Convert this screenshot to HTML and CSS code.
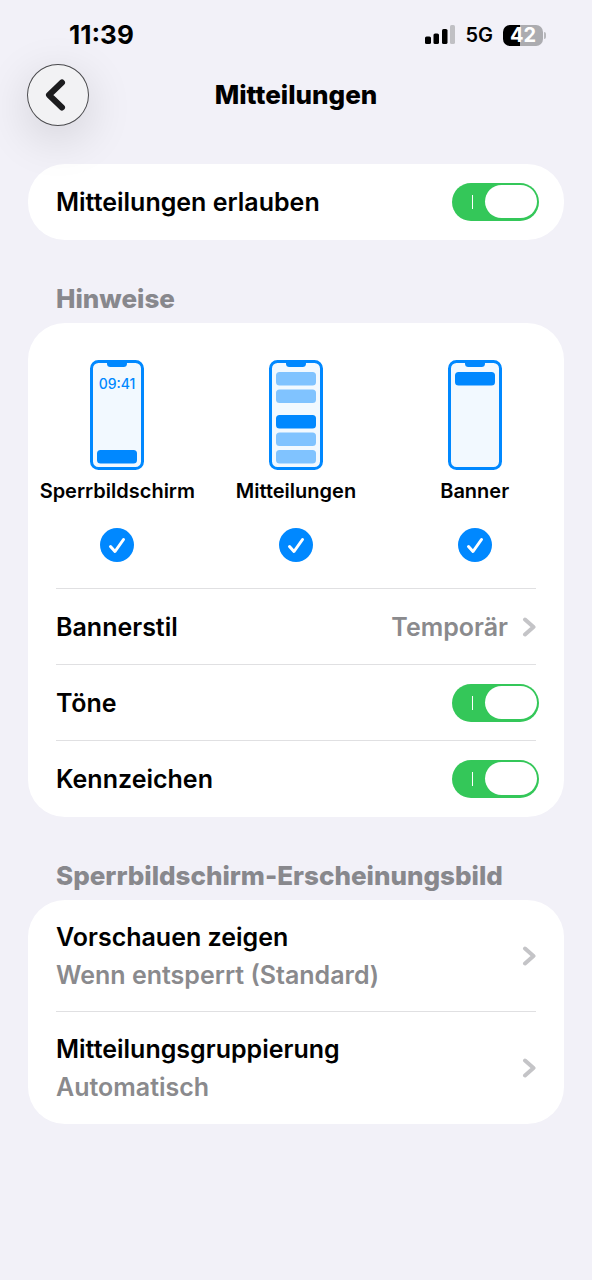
FILE: index.html
```html
<!DOCTYPE html>
<html lang="de">
<head>
<meta charset="utf-8">
<meta name="viewport" content="width=device-width, initial-scale=1">
<title>Mitteilungen</title>
<link rel="stylesheet" href="styles.css">
</head>
<body>
<div class="status">
  <span class="time">11:39</span>
  <div class="indicators">
    <svg class="signal" width="30" height="20" viewBox="0 0 30 20" aria-hidden="true">
      <rect x="0" y="11.500" width="6" height="7.500" rx="1.600"/>
      <rect x="8.500" y="8.500" width="5.500" height="10.500" rx="1.600"/>
      <rect x="17" y="4" width="5.500" height="15" rx="1.600"/>
      <rect x="25" y="0" width="5" height="19" rx="1.600" fill="#c0c0c4"/>
    </svg>
    <span class="network">5G</span>
    <div class="battery"><span class="level">42</span><span class="cap"></span></div>
  </div>
</div>
<header class="nav">
  <button class="back" type="button" aria-label="Zurück">
    <svg width="62" height="62" viewBox="0 0 62 62" aria-hidden="true"><path d="M35 18.500 22 31 35 43.500" fill="none" stroke="#1c1c1e" stroke-width="6" stroke-linecap="round" stroke-linejoin="round"/></svg>
  </button>
  <h1 class="title">Mitteilungen</h1>
</header>
<main class="content">
  <section class="card">
    <label class="row switch-row"><span>Mitteilungen erlauben</span><input class="switch" type="checkbox" role="switch" checked></label>
  </section>

  <h2 class="heading">Hinweise</h2>
  <section class="card">
    <div class="item options">
      <label class="option">
        <svg width="54" height="110" viewBox="0 0 54 110" aria-hidden="true">
          <rect class="phone" x="1.500" y="1.500" width="51" height="107" rx="7"/>
          <path class="solid" d="M16 1h22c-1 0-1 1-1 2 0 3-1 4-4 4H21c-3 0-4-1-4-4 0-1 0-2-1-2z"/>
          <text class="clock" x="27" y="29" text-anchor="middle">09:41</text>
          <rect class="solid" x="7" y="90" width="40" height="13.500" rx="3.500"/>
        </svg>
        <span>Sperrbildschirm</span>
        <span class="tick"><input type="checkbox" checked><svg width="34" height="34" viewBox="0 0 34 34" aria-hidden="true"><path d="M10.500 18.500 15 23.500 23.500 11.500"/></svg></span>
      </label>
      <label class="option">
        <svg width="54" height="110" viewBox="0 0 54 110" aria-hidden="true">
          <rect class="phone" x="1.500" y="1.500" width="51" height="107" rx="7"/>
          <path class="solid" d="M16 1h22c-1 0-1 1-1 2 0 3-1 4-4 4H21c-3 0-4-1-4-4 0-1 0-2-1-2z"/>
          <rect class="pale" x="7" y="12" width="40" height="13.500" rx="3.500"/>
          <rect class="pale" x="7" y="29.500" width="40" height="13.500" rx="3.500"/>
          <rect class="solid" x="7" y="55" width="40" height="13.500" rx="3.500"/>
          <rect class="pale" x="7" y="72.500" width="40" height="13.500" rx="3.500"/>
          <rect class="pale" x="7" y="90" width="40" height="13.500" rx="3.500"/>
        </svg>
        <span>Mitteilungen</span>
        <span class="tick"><input type="checkbox" checked><svg width="34" height="34" viewBox="0 0 34 34" aria-hidden="true"><path d="M10.500 18.500 15 23.500 23.500 11.500"/></svg></span>
      </label>
      <label class="option">
        <svg width="54" height="110" viewBox="0 0 54 110" aria-hidden="true">
          <rect class="phone" x="1.500" y="1.500" width="51" height="107" rx="7"/>
          <path class="solid" d="M16 1h22c-1 0-1 1-1 2 0 3-1 4-4 4H21c-3 0-4-1-4-4 0-1 0-2-1-2z"/>
          <rect class="solid" x="7" y="12" width="40" height="13.500" rx="3.500"/>
        </svg>
        <span>Banner</span>
        <span class="tick"><input type="checkbox" checked><svg width="34" height="34" viewBox="0 0 34 34" aria-hidden="true"><path d="M10.500 18.500 15 23.500 23.500 11.500"/></svg></span>
      </label>
    </div>
    <div class="item">
      <a class="row" href="#"><span>Bannerstil</span><span class="value">Temporär</span><svg class="chevron" width="14" height="22" viewBox="0 0 14 22" aria-hidden="true"><path d="M3 3.500 11.500 11 3 18.500"/></svg></a>
    </div>
    <div class="item">
      <label class="row switch-row"><span>Töne</span><input class="switch" type="checkbox" role="switch" checked></label>
    </div>
    <div class="item">
      <label class="row switch-row"><span>Kennzeichen</span><input class="switch" type="checkbox" role="switch" checked></label>
    </div>
  </section>

  <h2 class="heading">Sperrbildschirm-Erscheinungsbild</h2>
  <section class="card">
    <div class="item">
      <a class="row tall" href="#"><span class="stack"><span>Vorschauen zeigen</span><span class="detail">Wenn entsperrt (Standard)</span></span><svg class="chevron" width="14" height="22" viewBox="0 0 14 22" aria-hidden="true"><path d="M3 3.500 11.500 11 3 18.500"/></svg></a>
    </div>
    <div class="item">
      <a class="row tall" href="#"><span class="stack"><span>Mitteilungsgruppierung</span><span class="detail">Automatisch</span></span><svg class="chevron" width="14" height="22" viewBox="0 0 14 22" aria-hidden="true"><path d="M3 3.500 11.500 11 3 18.500"/></svg></a>
    </div>
  </section>
</main>
</body>
</html>
```
FILE: styles.css
```css
* {
  box-sizing: border-box;
}

body {
  margin: 0;
  min-height: 100vh;
  background: #f2f1f8;
  color: #000;
  font: 600 25px/38px Inter, "Liberation Sans", sans-serif;
}

.status {
  display: flex;
  align-items: center;
  justify-content: space-between;
  height: 64px;
  padding: 6px 46px 0 69px;
}

.time {
  font-size: 26px;
  font-weight: 700;
}

.indicators {
  display: flex;
  align-items: center;
  gap: 10px;
}

.network {
  font-size: 20px;
}

.battery {
  display: flex;
  align-items: center;
  gap: 1px;
}

.level {
  width: 40px;
  border-radius: 7px;
  background: linear-gradient(90deg, #000 42%, #acacb0 42%);
  color: #fff;
  font-size: 20px;
  font-weight: 700;
  line-height: 21px;
  text-align: center;
}

.cap {
  width: 2px;
  height: 7px;
  border-radius: 0 2px 2px 0;
  background: #b8b8bc;
}

.nav {
  display: grid;
  grid-template-columns: 62px 1fr 62px;
  align-items: center;
  padding: 0 27px;
}

.back {
  display: flex;
  width: 62px;
  height: 62px;
  padding: 0;
  border: 0;
  border-radius: 50%;
  background: #f2f2f4;
  box-shadow: inset 0 0 0 1px #48484c, 0 12px 48px rgba(0, 0, 0, 0.14);
}

.title {
  margin: 0;
  font-size: 26px;
  font-weight: 800;
  text-align: center;
}

.content {
  padding: 38px 28px;
}

.card {
  overflow: hidden;
  padding-bottom: 1px;
  border-radius: 37px;
  background: #fff;
}

.heading {
  margin: 40px 28px 5px;
  color: #88888d;
  font-size: 26px;
  font-weight: 800;
}

.item + .item::before {
  content: "";
  display: block;
  height: 1px;
  margin: 0 28px;
  background: #e0e0e2;
}

.row {
  display: flex;
  align-items: center;
  justify-content: space-between;
  gap: 14px;
  min-height: 75px;
  padding: 0 28px;
  color: inherit;
  text-decoration: none;
}

.switch-row {
  padding-right: 25px;
}

.tall {
  min-height: 111px;
}

.stack {
  display: grid;
}

.value {
  margin-left: auto;
}

.value,
.detail {
  color: #8a8a8d;
}

.chevron path {
  fill: none;
  stroke: #c4c4c7;
  stroke-width: 4;
  stroke-linecap: round;
  stroke-linejoin: round;
}

.switch {
  display: flex;
  flex: none;
  align-items: center;
  justify-content: flex-end;
  gap: 12px;
  width: 87px;
  height: 38px;
  margin: 0;
  padding-right: 2px;
  border-radius: 19px;
  background: #34c759;
  appearance: none;
}

.switch::before {
  content: "";
  width: 1px;
  height: 14px;
  background: #fff;
}

.switch::after {
  content: "";
  width: 52px;
  height: 33px;
  border-radius: 17px;
  background: #fff;
}

.options {
  display: grid;
  grid-template-columns: repeat(3, 1fr);
  padding: 37px 0 26px;
}

.option {
  display: grid;
  justify-items: center;
  font-size: 20px;
  line-height: 42px;
}

.phone {
  fill: #f2f9ff;
  stroke: #0088ff;
  stroke-width: 3;
}

.solid {
  fill: #0088ff;
}

.pale {
  fill: #80c3ff;
}

.clock {
  fill: #0088ff;
  font-size: 14px;
  font-weight: 500;
}

.tick {
  display: grid;
  margin-top: 16px;
}

.tick > * {
  grid-area: 1 / 1;
}

.tick input {
  width: 34px;
  height: 34px;
  margin: 0;
  border-radius: 50%;
  background: #0088ff;
  appearance: none;
}

.tick svg {
  z-index: 1;
  pointer-events: none;
}

.tick path {
  fill: none;
  stroke: #fff;
  stroke-width: 3;
  stroke-linecap: round;
  stroke-linejoin: round;
}
```
